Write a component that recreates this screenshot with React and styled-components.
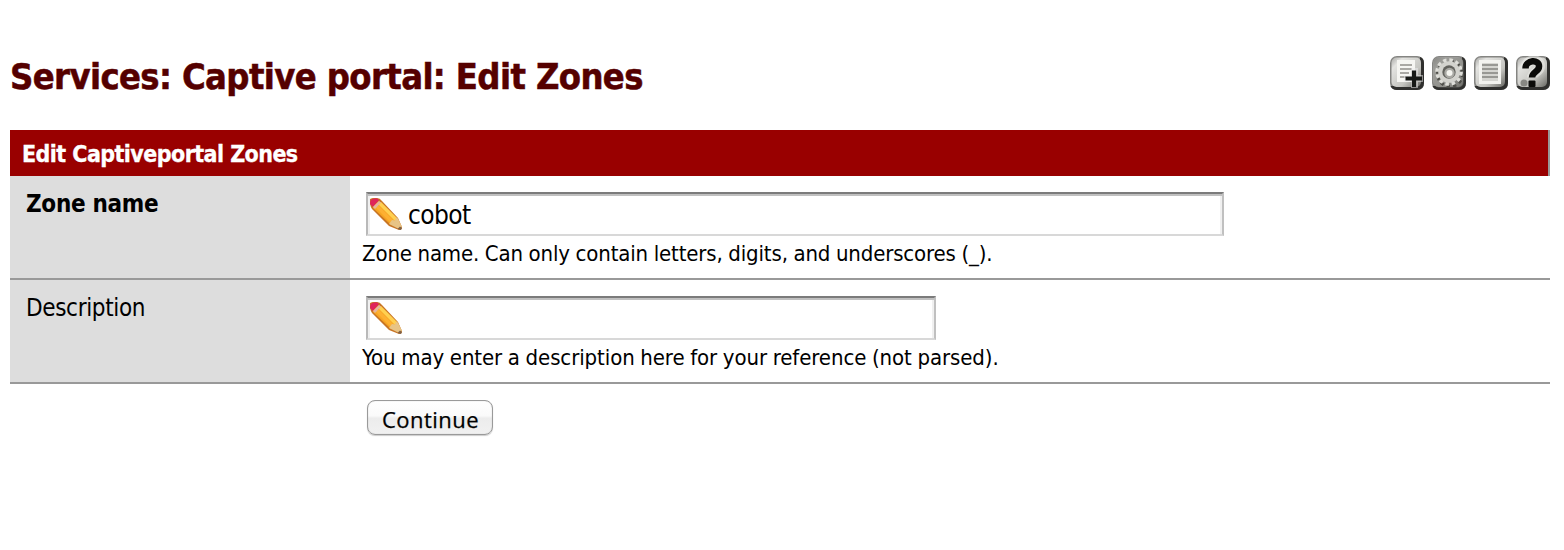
import React from "react";
import styled, { createGlobalStyle } from "styled-components";

const Global = createGlobalStyle`
  * { box-sizing: border-box; }
  body {
    margin: 0;
    background: #fff;
    color: #000;
    font-family: "DejaVu Sans Condensed", "DejaVu Sans", sans-serif;
    font-stretch: condensed;
  }
`;

const Page = styled.main`
  width: 1564px;
  height: 550px;
  padding: 56px 14px 0 10px;
  overflow: hidden;
`;

const Header = styled.header`
  display: flex;
  justify-content: space-between;
  align-items: flex-start;
  height: 74px;
`;

const Title = styled.h1`
  margin: 0;
  font-size: 36px;
  line-height: 42px;
  letter-spacing: -0.62px;
  color: #500;
  -webkit-text-stroke: 0.5px #500;
  white-space: nowrap;
`;

const Toolbar = styled.nav`
  display: flex;
  gap: 8px;
`;

const Icon = styled.svg`
  display: block;
  flex: none;
  width: ${(p) => p.$size}px;
  height: ${(p) => p.$size}px;
`;

const SectionTitle = styled.h2`
  margin: 0;
  height: 46px;
  padding-left: 12px;
  border-right: 2px solid #999;
  background: #900;
  color: #fff;
  font-size: 23px;
  line-height: 48px;
  letter-spacing: -0.57px;
  -webkit-text-stroke: 0.3px #fff;
`;

const Row = styled.div`
  display: flex;
  height: 104px;
  border-bottom: 2px solid #999;
`;

const Label = styled.label`
  width: 340px;
  padding: 13px 16px;
  background: #ddd;
  font-size: 24px;
  line-height: 30px;
  font-weight: ${(p) => (p.$required ? 700 : 400)};
  letter-spacing: ${(p) => p.$spacing}px;
`;

const Cell = styled.div`
  flex: 1;
  padding: 16px 12px 0;
`;

const Field = styled.div`
  display: flex;
  align-items: center;
  width: ${(p) => p.$width}px;
  height: 44px;
  margin-left: 4px;
  padding-left: 2px;
  border: 2px solid;
  border-color: #7b7b7b #c0c0c0 #d8d8d8 #b9b9b9;
  box-shadow: inset 0 2px #c0c0c0, inset 2px 0 #f0f0f0, inset -2px 0 #f0f0f0;
`;

const Input = styled.input`
  flex: 1;
  min-width: 0;
  height: 36px;
  margin: 2px 4px 0 0;
  padding: 0 0 0 6px;
  border: 0;
  outline: 0;
  background: transparent;
  color: #000;
  font: inherit;
  font-size: 26px;
  letter-spacing: -0.6px;
`;

const Hint = styled.div`
  margin-top: 4px;
  font-size: 22px;
  line-height: 28px;
  letter-spacing: ${(p) => p.$spacing}px;
  word-spacing: -0.5px;
  white-space: nowrap;
`;

const Actions = styled.div`
  padding: 16px 0 0 357px;
`;

const Button = styled.button`
  display: block;
  width: 126px;
  height: 35px;
  padding: 2px 0 0 1px;
  border: 1px solid #9a9a9a;
  border-radius: 8px;
  background: linear-gradient(#fff 0%, #fafafa 45%, #ececec 52%, #f1f1f1 100%);
  box-shadow: inset 0 0 1px #aaa, 0 1px 1px #ccc;
  color: #000;
  font-family: "Open Sans", "Noto Sans", sans-serif;
  font-stretch: normal;
  font-size: 22px;
  line-height: 28px;
  letter-spacing: 0.45px;
  -webkit-text-stroke: 0.25px #000;
`;

function ToolIcon({ id, children }) {
  return (
    <Icon $size={34} viewBox="0 0 34 34" aria-hidden="true">
      <defs>
        <linearGradient id={id} x1="0" y1="0" x2="1" y2="1">
          <stop offset="0" stopColor="#a8a8a5" />
          <stop offset=".2" stopColor="#e4e4e1" />
          <stop offset=".65" stopColor="#c5c5c0" />
          <stop offset="1" stopColor="#686863" />
        </linearGradient>
      </defs>
      <rect width="34" height="34" rx="7" fill="#858582" />
      <path d="M34 7v20q0 7-7 7H7q-5 0-6.500-4H25q5 0 5-5V1q4 1 4 6Z" fill="#30302e" />
      <rect x="1.500" y="1.500" width="29.500" height="29.500" rx="5" fill={`url(#${id})`} />
      {children}
    </Icon>
  );
}

function AddIcon() {
  return (
    <ToolIcon id="add">
      <path d="M7 4h18v22H7z" fill="#f6f6f2" />
      <path d="M10 9h12M10 13h12M10 17h9M10 21h6" stroke="#aaa9a4" strokeWidth="2" />
      <path d="M24.500 12v20M14 22.500h19" stroke="#eee" strokeWidth="7" opacity=".5" />
      <path d="M24 14.500V31M15.500 22.500H32" stroke="#171916" strokeWidth="4.200" />
    </ToolIcon>
  );
}

function GearIcon() {
  return (
    <ToolIcon id="gear">
      <rect x="1.500" y="1.500" width="30" height="30" rx="5" fill="#777772" opacity=".65" />
      <circle cx="18" cy="18" r="12.500" fill="none" stroke="#4d4d48" strokeWidth="3" strokeDasharray="3.300 3.240" />
      <circle cx="17" cy="16" r="12" fill="none" stroke="#deded9" strokeWidth="3.500" strokeDasharray="3.500 2.780" />
      <circle cx="17" cy="16" r="10.800" fill="#d3d3ce" />
      <circle cx="17" cy="16" r="6.700" fill="#62625d" />
      <circle cx="17.500" cy="17" r="5.200" fill="#a9a9a4" />
      <circle cx="17.500" cy="17" r="3" fill="#f4f4ef" />
    </ToolIcon>
  );
}

function ListIcon() {
  return (
    <ToolIcon id="list">
      <rect x="5" y="4" width="22" height="24" fill="#f3f3ef" />
      <rect x="8" y="7" width="16" height="18" fill="#d5d5d0" />
      <path d="M8 9h16M8 13h16M8 17h16M8 21h16" stroke="#989893" strokeWidth="2" />
    </ToolIcon>
  );
}

function HelpIcon() {
  return (
    <ToolIcon id="help">
      <circle cx="8" cy="27" r="3.500" fill="#888883" />
      <path d="M9.500 12.500C9.500 2 25 2 24 10.500c0 6-8 5.500-8 11" fill="none" stroke="#f0f0eb" strokeWidth="10" opacity=".5" />
      <path d="M9.500 12.500C9.500 3.500 23.500 3 23 10.500c0 5.500-7 5-7 11" fill="none" stroke="#0b0b09" strokeWidth="6.500" />
      <rect x="12.500" y="24.500" width="7" height="6.500" rx="1" fill="#0b0b09" />
    </ToolIcon>
  );
}

function PencilIcon() {
  return (
    <Icon $size={32} viewBox="0 0 32 32" aria-hidden="true">
      <path d="M0 1Q2-.5 7 0q3 0 5 3l16 17 4 9q0 3-3 3l-10-4L2 11Q-1 6 0 1Z" fill="#c87524" />
      <path d="m3 8 6-5 18 18 2 8-9-3L3 10Z" fill="#f7a522" />
      <path d="m8 6 3-2 16 16-2 3Z" fill="#ffd050" />
      <path d="m5 9 3-2 16 16-2 3Z" fill="#fdb032" />
      <path d="m19 26 3-4 3 .5 1-3 2 1 4 8.500-3 2Z" fill="#e8c486" />
      <path d="m27.500 31 2.500-2.500 2 1.500-1 2Z" fill="#816044" />
      <path d="M0 6Q0 1 3 1q4-2 6 1L3 9Z" fill="#df245a" />
      <path d="m3 9 6-6 2 1.500L5 11Z" fill="#e3b4a0" />
    </Icon>
  );
}

function FormRow({ id, label, required, value, width, hint, labelSpacing, hintSpacing }) {
  return (
    <Row>
      <Label htmlFor={id} $required={required} $spacing={labelSpacing}>{label}</Label>
      <Cell>
        <Field $width={width}>
          <PencilIcon />
          <Input id={id} defaultValue={value} />
        </Field>
        <Hint $spacing={hintSpacing}>{hint}</Hint>
      </Cell>
    </Row>
  );
}

export default function App() {
  return (
    <Page>
      <Global />
      <Header>
        <Title>Services: Captive portal: Edit Zones</Title>
        <Toolbar>
          <AddIcon />
          <GearIcon />
          <ListIcon />
          <HelpIcon />
        </Toolbar>
      </Header>
      <SectionTitle>Edit Captiveportal Zones</SectionTitle>
      <FormRow
        id="zone"
        label="Zone name"
        required
        value="cobot"
        width={858}
        hint="Zone name. Can only contain letters, digits, and underscores (_)."
        labelSpacing={-0.3}
        hintSpacing={-0.14}
      />
      <FormRow
        id="description"
        label="Description"
        value=""
        width={570}
        hint="You may enter a description here for your reference (not parsed)."
        labelSpacing={-0.35}
        hintSpacing={-0.09}
      />
      <Actions>
        <Button type="button">Continue</Button>
      </Actions>
    </Page>
  );
}
